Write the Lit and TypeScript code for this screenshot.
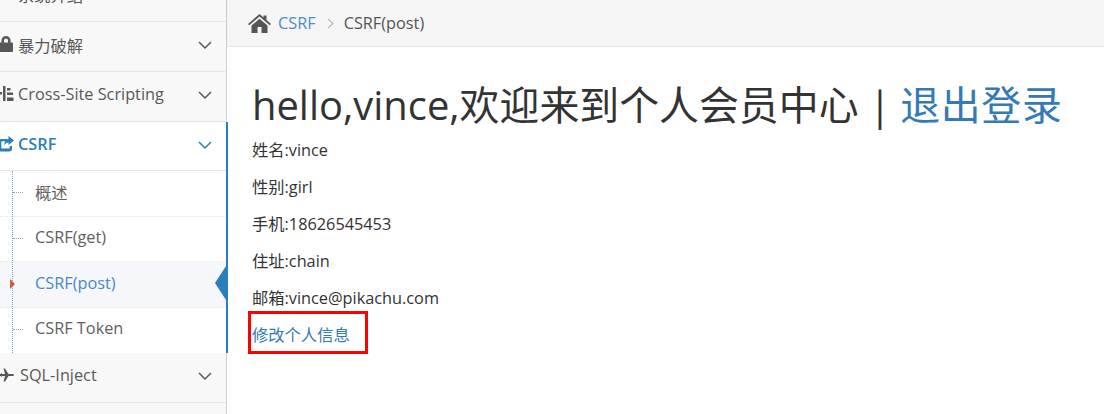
import { LitElement, html, css, svg } from "lit";
import { customElement } from "lit/decorators.js";

const chevron = html`<svg class="chev" viewBox="0 0 14 9"><path d="M1 1 L7 7 L13 1" fill="none" stroke="currentColor" stroke-width="1.5"/></svg>`;

const ico = {
  lock: svg`<path d="M2.500 6.500V4.500a4.500 4.500 0 0 1 9 0v2h1.500a1 1 0 0 1 1 1V15a1 1 0 0 1-1 1H1a1 1 0 0 1-1-1V7.500a1 1 0 0 1 1-1zM5 6.500h4v-2a2 2 0 0 0-4 0z" fill-rule="evenodd"/>`,
  list: svg`<path d="M0 6h3v2.500H0zM4 0h2.500v15H4zM8 2h3.500v2.500H8zM8 6.500h6v2.500H8zM8 11.500h6.500V15H8z"/>`,
  share: svg`<path d="M0 5.500A2.500 2.500 0 0 1 2.500 3H8v2.200H3a.7.7 0 0 0-.7.7v6a.7.7 0 0 0 .7.700h7a.7.7 0 0 0 .7-.7V10H13v2.500A3 3 0 0 1 10 15.500H2.500A2.500 2.500 0 0 1 0 13z"/><path d="M9.500 0 15 4.500 9.500 9V6.500C7.500 6.500 6 7.500 5.500 9.500 5 6 7 3 9.500 3z"/>`,
  plane: svg`<path d="M0 6.800 2 7.100V5.500L3 7h3L4.500 1.500H6L9.500 7H13.500L16 8 13.500 9H9.500L6 14.500H4.500L6 9H3L2 10.500V8.900L0 9.200z"/>`,
};

@customElement("app-root")
export class AppRoot extends LitElement {
  static styles = css`
    :host { display: block; width: 1104px; height: 414px; overflow: hidden; position: relative; background: #fff;
      font-family: "Open Sans", "Noto Sans CJK SC", sans-serif; font-size: 16.3px; color: #393939; }
    .layout { display: flex; height: 414px; }
    .side { width: 228px; flex: none; overflow: hidden; }
    .list { margin-top: -28px; }
    .item { width: 227px; box-sizing: border-box; height: 50px; padding-bottom: 4px; display: flex; align-items: center; border-bottom: 1px solid #e5e5e5; border-right: 1px solid #ccc; background: #f8f8f8; color: #585858; position: relative; }
    .item.tight { padding-bottom: 6px; }
    .item svg.ic { position: absolute; left: -1px; top: 14px; width: 15px; height: 16px; fill: #585858; }
    .item span { margin-left: 18px; }
    .item.sql span { margin-left: 20px; }
    .chev { width: 14px; height: 9px; position: absolute; left: 197.500px; top: 18.500px; color: #585858; }
    .open { width: 226px; border-right: 2px solid #2b7dbc; position: relative; }
    .open .item { background: #fff; color: #2b7dbc; font-weight: 600; width: 226px; height: 49px; border-right: 0; }
    .open .item svg.ic { fill: #2b7dbc; }
    .open .chev { color: #2b7dbc; }
    .subs { position: relative; background: #fff; height: 182px; }
    .subs::before { content: ""; position: absolute; left: 12px; top: 0; bottom: 0; border-left: 1px dotted #7fa8c9; z-index: 1; }
    .sub { height: 45.500px; display: flex; align-items: center; padding: 0 0 3px 35px; border-bottom: 1px dotted #e4e4e4; color: #616161; position: relative; box-sizing: border-box; }
    .sub:last-child { border-bottom: 0; padding-bottom: 4px; }
    .sub::before { content: ""; position: absolute; left: 13px; top: 21px; width: 10px; border-top: 1px dotted #7fa8c9; }
    .sub.active { background: #f5f7fa; color: #4b88c7; }
    .sub.active::before { display: none; }
    .mark { position: absolute; left: 10px; top: 17px; z-index: 2; border-left: 5px solid #c86139; border-top: 5px solid transparent; border-bottom: 5px solid transparent; }
    .tip { position: absolute; right: 0; top: 4px; width: 0; height: 0; border-right: 11px solid #2b7dbc; border-top: 17px solid transparent; border-bottom: 17px solid transparent; }
    .main { flex: 1; min-width: 0; margin-left: -1px; }
    .crumbs { height: 46px; background: #f5f5f5; border-bottom: 1px solid #e5e5e5; display: flex; align-items: center; padding-left: 21px; color: #555; }
    .crumbs .home { width: 23px; height: 19px; fill: #555; margin-right: 7px; }
    .crumbs a { color: #4c8fbd; }
    .crumbs .sep { width: 7px; height: 11px; margin: 0 10px 0 11px; fill: none; stroke: #b8c0c8; stroke-width: 1.4; }
    .content { padding: 0 25px; }
    h1 { margin: 33px 0 0; font-weight: 400; font-size: 39.9px; line-height: 50px; color: #333; white-space: nowrap; }
    h1 a { margin-left: -1px; letter-spacing: 0.7px; }
    h1 a, .edit { color: #337ab7; }
    p { margin: 0; line-height: 37px; height: 37px; color: #333; }
    .rows { padding-top: 2px; }
    .edit { line-height: 37px; display: block; }
    .redbox { position: absolute; left: 248px; top: 311px; width: 120px; height: 43px; box-sizing: border-box; border: 3px solid #f00; }
  `;

  item(icon: unknown, label: string, cls = "") {
    return html`<div class="item ${cls}">${icon ? html`<svg class="ic" viewBox="0 0 15 16">${icon}</svg>` : ""}<span>${label}</span>${label ? chevron : ""}</div>`;
  }

  render() {
    return html`<div class="layout">
      <div class="side"><div class="list">
        ${this.item(null, "系统介绍")}
        ${this.item(ico.lock, "暴力破解")}
        ${this.item(ico.list, "Cross-Site Scripting", "tight")}
        <div class="open">
          ${this.item(ico.share, "CSRF")}
          <div class="subs">
            <div class="sub">概述</div>
            <div class="sub">CSRF(get)</div>
            <div class="sub active"><i class="mark"></i>CSRF(post)<i class="tip"></i></div>
            <div class="sub">CSRF Token</div>
          </div>
        </div>
        ${this.item(ico.plane, "SQL-Inject", "sql tight")}
        ${this.item(null, "")}
      </div></div>
      <div class="main">
        <div class="crumbs">
          <svg class="home" viewBox="0 0 23 19"><path d="M11.500 0 15.500 3.500V1.500H18.500V6L23 10 21.800 11.300 11.500 2.500 1.200 11.300 0 10zM3.500 11.500 11.500 4.800 19.500 11.500V19H13.500V13H9.500V19H3.500z"/></svg>
          <a>CSRF</a>
          <svg class="sep" viewBox="0 0 7 11"><path d="M1 1 6 5.500 1 10"/></svg>
          <span>CSRF(post)</span>
        </div>
        <div class="content">
          <h1>hello,vince,欢迎来到个人会员中心 | <a>退出登录</a></h1>
          <div class="rows">
            <p>姓名:vince</p>
            <p>性别:girl</p>
            <p>手机:18626545453</p>
            <p>住址:chain</p>
            <p>邮箱:vince@pikachu.com</p>
            <a class="edit">修改个人信息</a>
          </div>
        </div>
      </div>
    </div>
    <div class="redbox"></div>`;
  }
}
